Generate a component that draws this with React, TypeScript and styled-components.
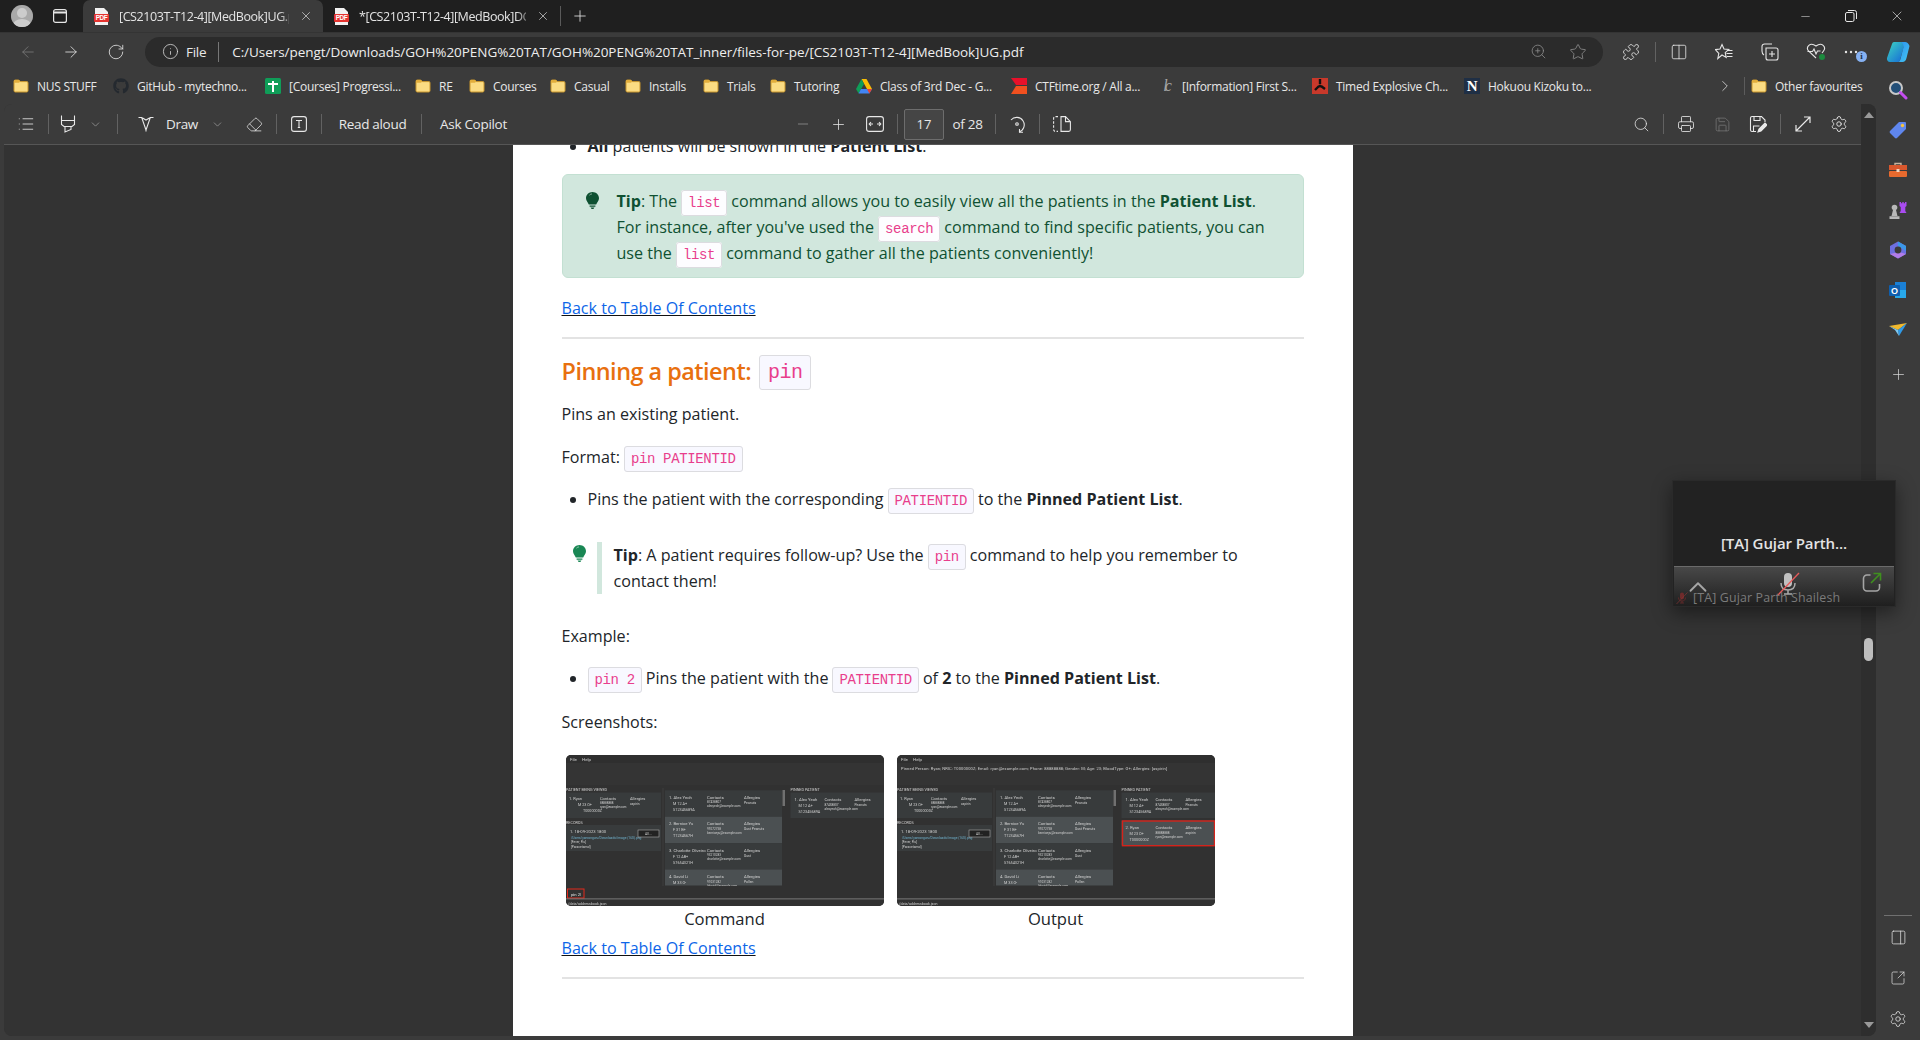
import React from 'react';
import styled, { createGlobalStyle } from 'styled-components';
import {
  ArrowLeft, ArrowRight, ChevronDown, ChevronRight, Info, List, Minus, Plus, Printer, RotateCw, Save,
  Search, Settings, Star, X, ZoomIn, Puzzle, Columns2, PanelRight, SquareArrowOutUpRight, Eraser, ChevronUp,
} from 'lucide-react';
import { FaGithub } from 'react-icons/fa';

const UI_FONT = `"Open Sans", "Noto Sans", sans-serif`;
const MONO = `"Liberation Mono", "DejaVu Sans Mono", monospace`;

const GlobalStyle = createGlobalStyle`
  html, body { margin: 0; padding: 0; background: #3b3b3b; overflow: hidden; }
  * { box-sizing: border-box; }
  #root { width: 1920px; height: 1040px; }
`;

const Window = styled.div`
  position: relative;
  width: 1920px;
  height: 1040px;
  display: flex;
  flex-direction: column;
  overflow: hidden;
  background: #3b3b3b;
  font-family: ${UI_FONT};
  color: #e8e8e8;
`;

/* ---- tab strip ---- */
const TabStrip = styled.div`
  height: 32px;
  flex: none;
  display: flex;
  align-items: stretch;
  background: #1f1f1f;
`;

const StripSlot = styled.div<{ $w: number }>`
  width: ${(p) => p.$w}px;
  flex: none;
  display: flex;
  align-items: center;
  justify-content: center;
  color: #e6e6e6;
`;

const Avatar = styled.div`
  width: 22px;
  height: 22px;
  border-radius: 50%;
  background: #b9b9b9;
  overflow: hidden;
`;

const Tab = styled.div<{ $active?: boolean }>`
  width: ${(p) => (p.$active ? 240 : 237)}px;
  flex: none;
  display: flex;
  align-items: center;
  padding: 0 10px 0 11px;
  gap: 10px;
  border-radius: 7px 7px 0 0;
  background: ${(p) => (p.$active ? '#3b3b3b' : 'transparent')};
  font-size: 12.5px;
  letter-spacing: -0.42px;
`;

const TabTitle = styled.span`
  flex: 1;
  min-width: 0;
  white-space: nowrap;
  color: #e4e4e4;
  mask-image: linear-gradient(to right, #000 94%, rgba(0, 0, 0, 0.45));
`;

const StripSep = styled.div`
  width: 1px;
  height: 20px;
  align-self: center;
  background: #5a5a5a;
`;

const WindowControls = styled.div`
  margin-left: auto;
  display: flex;
`;

/* ---- address bar ---- */
const NavBar = styled.div`
  height: 38px;
  flex: none;
  display: flex;
  align-items: center;
  background: #3b3b3b;
  border-top: 1px solid #343434;
`;

const NavSlot = styled.div<{ $w: number; $ml?: number }>`
  position: relative;
  width: ${(p) => p.$w}px;
  margin-left: ${(p) => p.$ml ?? 0}px;
  flex: none;
  display: flex;
  align-items: center;
  justify-content: center;
  color: #e6e6e6;
`;

const AddressPill = styled.div`
  width: 1458px;
  height: 30px;
  margin-left: 13px;
  flex: none;
  display: flex;
  align-items: center;
  border-radius: 15px;
  background: #2b2b2b;
  padding-left: 17px;
`;

const FileLabel = styled.span`
  font-size: 13.5px;
  margin-left: 7px;
  letter-spacing: -0.3px;
`;

const PillSep = styled.div`
  width: 1px;
  height: 20px;
  margin: 0 13px 0 12px;
  background: #777;
`;

const Url = styled.span`
  font-size: 13.5px;
  letter-spacing: -0.05px;
  color: #eee;
  white-space: nowrap;
`;

const PillEnd = styled.div`
  margin-left: auto;
  display: flex;
  gap: 22px;
  padding-right: 16px;
  color: #8f8f8f;
`;

const Badge = styled.div`
  position: absolute;
  right: 0px;
  bottom: -8px;
  width: 11px;
  height: 11px;
  border-radius: 50%;
  background: #86b1f2;
  color: #20304a;
  font: bold 9px/11px "Liberation Serif", serif;
  text-align: center;
`;

/* ---- main ---- */
const Body = styled.div`
  flex: 1;
  min-height: 0;
  display: flex;
`;

const LeftColumn = styled.div`
  flex: 1;
  min-width: 0;
  display: flex;
  flex-direction: column;
`;

const Bookmarks = styled.div`
  height: 34px;
  flex: none;
  display: flex;
  align-items: center;
  padding: 0 0 2px 13px;
`;

const Bookmark = styled.div<{ $w: number }>`
  width: ${(p) => p.$w}px;
  flex: none;
  display: flex;
  align-items: center;
  gap: 8px;
  font-size: 12px;
  letter-spacing: -0.26px;
  white-space: nowrap;
  color: #e8e8e8;
`;

const BookmarkEnd = styled.div`
  display: flex;
  align-items: center;
  margin-left: 122px;
  color: #ccc;
`;

const BookmarkSep = styled.div`
  width: 1px;
  height: 18px;
  margin: 0 6px 0 10px;
  background: #5c5c5c;
`;

const Viewer = styled.div`
  flex: 1;
  min-height: 0;
  display: flex;
  margin: 0 0 4px 4px;
  border-radius: 8px;
  overflow: hidden;
  background: #333;
`;

const ViewerMain = styled.div`
  flex: 1;
  min-width: 0;
  display: flex;
  flex-direction: column;
`;

const PdfToolbar = styled.div`
  height: 41px;
  flex: none;
  display: flex;
  align-items: center;
  padding: 0 8px;
  background: #3b3b3b;
  border-bottom: 1px solid #565656;
`;

const Tool = styled.div<{ $w: number; $ml?: number; $dim?: boolean }>`
  width: ${(p) => p.$w}px;
  margin-left: ${(p) => p.$ml ?? 0}px;
  flex: none;
  display: flex;
  align-items: center;
  justify-content: center;
  font-size: 13.5px;
  letter-spacing: -0.3px;
  white-space: nowrap;
  color: ${(p) => (p.$dim ? '#777' : '#e8e8e8')};
`;

const ToolSep = styled.div`
  width: 1px;
  height: 20px;
  background: #626262;
`;

const PageInput = styled.div`
  width: 40px;
  height: 31px;
  margin-left: 3px;
  flex: none;
  display: flex;
  align-items: center;
  justify-content: center;
  font-size: 13px;
  background: #454545;
  border: 1px solid #6d6d6d;
  border-radius: 2px;
`;

const ToolsRight = styled.div`
  margin-left: auto;
  display: flex;
  align-items: center;
`;

const Canvas = styled.div`
  flex: 1;
  min-height: 0;
  display: flex;
  justify-content: center;
  overflow: hidden;
  background: #333;
`;

const Page = styled.div`
  width: 840px;
  height: 891px;
  flex: none;
  padding: 0 49px;
  background: #fff;
  overflow: hidden;
  color: #212529;
  font-size: 16.1px;
  line-height: 26px;
`;

const Para = styled.p<{ $mt?: number }>`
  margin: ${(p) => p.$mt ?? 0}px 0 0;
  white-space: nowrap;
`;

const BulletList = styled.ul<{ $mt?: number }>`
  margin: ${(p) => p.$mt ?? 0}px 0 0;
  padding: 0 0 0 26px;
  white-space: nowrap;
`;

const Code = styled.code<{ $white?: boolean; $first?: boolean }>`
  padding: 4px 6px;
  margin: ${(p) => (p.$first ? '0 4px 0 0' : '0 4px')};
  font-family: ${MONO};
  font-size: 14px;
  line-height: 1;
  letter-spacing: -0.35px;
  color: #e83e8c;
  background: ${(p) => (p.$white ? '#fdfdff' : '#f8f8ff')};
  border: 1px solid #dcdce0;
  border-radius: 3px;
`;

const TipBox = styled.div`
  height: 104px;
  margin-top: 15px;
  display: flex;
  padding: 13px 12px 0 23px;
  background: #d1e7dd;
  border: 1px solid #c3e0d2;
  border-radius: 6px;
  color: #0f5132;
  white-space: nowrap;
`;

const BulbCell = styled.div`
  width: 31px;
  flex: none;
  padding-top: 4px;
`;

const PlainTip = styled.div`
  height: 52px;
  margin-top: 30px;
  display: flex;
  white-space: nowrap;
`;

const PlainBulb = styled.div`
  width: 35px;
  flex: none;
  padding: 3px 0 0 11px;
`;

const PlainTipText = styled.div`
  padding-left: 12px;
  border-left: 5px solid #d1e7dd;
`;

const DocLink = styled.a`
  display: inline-block;
  color: #0d66e8;
  text-decoration: underline;
  text-decoration-color: #111;
  white-space: nowrap;
`;

const Rule = styled.div<{ $mt: number }>`
  height: 2px;
  margin-top: ${(p) => p.$mt}px;
  background: #e3e3e3;
`;

const Heading = styled.h2`
  margin: 15px 0 0;
  height: 36px;
  display: flex;
  align-items: center;
  font-size: 23.4px;
  font-weight: 600;
  letter-spacing: -0.5px;
  color: #e8700f;
  white-space: nowrap;
`;

const HeadingTitle = styled.span`
  margin-top: -2px;
`;

const HeadingCode = styled.code`
  height: 35px;
  line-height: 33px;
  margin-left: 8px;
  padding: 0 8px;
  font-family: ${MONO};
  font-size: 20px;
  font-weight: 400;
  letter-spacing: -0.6px;
  color: #e83e8c;
  background: #f8f8ff;
  border: 1px solid #dcdce0;
  border-radius: 3px;
`;

const Figures = styled.div`
  display: flex;
  gap: 13px;
  margin: 20px 0 0 4px;
`;

const Figure = styled.figure`
  width: 318px;
  margin: 0;
  text-align: center;
`;

const Caption = styled.figcaption`
  height: 26px;
  font-size: 16.6px;
`;

const ShotSvg = styled.svg`
  display: block;
  width: 318px;
  height: 151px;
  border-radius: 5px;
  filter: blur(0.3px);
`;

const ScrollTrack = styled.div`
  position: relative;
  width: 15px;
  flex: none;
  display: flex;
  flex-direction: column;
  align-items: center;
  justify-content: space-between;
  padding: 8px 0;
  background: #2e2e2e;
`;

const Arrow = styled.div<{ $down?: boolean }>`
  width: 0;
  height: 0;
  border-left: 5px solid transparent;
  border-right: 5px solid transparent;
  ${(p) => (p.$down ? 'border-top: 6px solid #999;' : 'border-bottom: 6px solid #999;')}
`;

const ScrollThumb = styled.div`
  position: absolute;
  left: 3px;
  top: 534px;
  width: 9px;
  height: 23px;
  border-radius: 5px;
  background: #bdbdbd;
`;

const SideBar = styled.div`
  width: 44px;
  flex: none;
  display: flex;
  flex-direction: column;
  align-items: center;
`;

const SideSlot = styled.div<{ $h: number }>`
  height: ${(p) => p.$h}px;
  flex: none;
  display: flex;
  align-items: center;
  justify-content: center;
  color: #ddd;
`;

const SideSep = styled.div`
  width: 28px;
  height: 1px;
  margin-top: auto;
  background: #707070;
`;

/* ---- floating call window ---- */
const CallWindow = styled.div`
  position: absolute;
  left: 1672px;
  top: 480px;
  width: 224px;
  height: 127px;
  display: flex;
  flex-direction: column;
  background: #222;
  border: 1px solid #2a2a2a;
  box-shadow: 0 6px 18px rgba(0, 0, 0, 0.45);
`;

const CallName = styled.div`
  height: 85px;
  flex: none;
  padding-top: 52px;
  text-align: center;
  font-size: 15px;
  font-weight: 600;
  letter-spacing: -0.1px;
  color: #e4e4e4;
  white-space: nowrap;
`;

const CallBar = styled.div`
  position: relative;
  height: 41px;
  margin: 0 1px;
  display: flex;
  align-items: flex-start;
  justify-content: space-between;
  padding: 5px 12px 0 9px;
  border-top: 1px solid #6b6b6b;
  background: linear-gradient(#484848, #1f1f1f);
`;

const CallLabel = styled.div`
  position: absolute;
  left: 2px;
  top: 22px;
  display: flex;
  align-items: center;
  gap: 5px;
  font-size: 12.4px;
  line-height: 17px;
  letter-spacing: 0.15px;
  color: #7b7b7b;
  white-space: nowrap;
`;

const Folder = () => (
  <svg width="16" height="16" viewBox="0 0 16 16" style={{ flex: 'none' }}>
    <path d="M1 3.2c0-.7.5-1.2 1.2-1.2h3.6l1.6 1.6h6.4c.7 0 1.2.5 1.2 1.2v8c0 .7-.5 1.2-1.2 1.2H2.2c-.7 0-1.2-.5-1.2-1.2z" fill="#fbdc83" stroke="#c8962d" />
    <path d="M1 3.2c0-.7.5-1.2 1.2-1.2h3.6l1.6 1.8-1.6 1H1z" fill="#e2ae3c" />
  </svg>
);

const PdfIcon = () => (
  <svg width="15" height="17" viewBox="0 0 15 17" style={{ flex: 'none' }}>
    <path d="M1 0h9l4 4v13H1z" fill="#f2f2f2" />
    <rect x="0" y="6" width="15" height="8" rx="1" fill="#e5332f" />
    <text x="7.5" y="12.4" textAnchor="middle" fontSize="6.4" fontWeight="700" fill="#fff" fontFamily="Liberation Sans">PDF</text>
  </svg>
);

const Bulb = ({ color }: { color: string }) => (
  <svg width="13" height="17" viewBox="0 0 13 17" style={{ display: 'block' }}>
    <path d="M6.5 0C2.9 0 0 2.8 0 6.2c0 2.8 2 3.8 2.8 6.3h7.4C11 10 13 9 13 6.2 13 2.8 10.1 0 6.5 0z" fill={color} />
    <path d="M3.6 13.5h5.8v1.2H3.6zM4.6 15.5h3.8L7.4 17H5.6z" fill={color} />
    <path d="M3.4 3.2c.8-.9 1.6-1.2 2.6-1.3" stroke="#fff" strokeOpacity=".5" fill="none" />
  </svg>
);

const MarkerIcon = () => (
  <svg width="16" height="18" viewBox="0 0 16 18" fill="none" stroke="#e8e8e8" strokeWidth="1.1">
    <path d="M1.5.5v5h13v-5M1.500 5.500v4l2.500 2h8l2.500-2v-4M1.500 5.500h13M5 11.500v5.500l6-2.500v-3" />
  </svg>
);

const DrawIcon = () => (
  <svg width="18" height="18" viewBox="0 0 18 18" fill="none" stroke="#e8e8e8" strokeWidth="1.1">
    <path d="M1.5 2.5h3.2L9 15l4.3-12.5h3.2M9 15v1.6M4.7 2.5 9 5l4.3-2.5" />
  </svg>
);

const TextBoxIcon = () => (
  <svg width="16" height="16" viewBox="0 0 16 16" fill="none" stroke="#e8e8e8" strokeWidth="1.1">
    <rect x=".6" y=".6" width="14.8" height="14.8" rx="2.5" />
    <path d="M5 4.5h6M8 4.5v7M6.8 11.5h2.4" />
  </svg>
);

const RotateIcon = () => (
  <svg width="18" height="18" viewBox="0 0 18 18" fill="none" stroke="#e8e8e8" strokeWidth="1.1">
    <path d="M3 5a7.5 7.5 0 1 1 8 12" />
    <path d="M11.5 14v3.2H15" />
    <circle cx="9" cy="9" r="1.3" />
  </svg>
);

const PageViewIcon = () => (
  <svg width="18" height="16" viewBox="0 0 18 16" fill="none" stroke="#e8e8e8" strokeWidth="1.1">
    <path d="M8 .6h4.5l4.9 5v8c0 1-.6 1.8-1.6 1.8H8zM12.5.6v5h4.9" />
    <path d="M5 .6H2.4C1.4.6.6 1.4.6 2.4v11.2c0 1 .8 1.8 1.8 1.8H5" strokeDasharray="2.5 1.6" />
  </svg>
);

const FitIcon = () => (
  <svg width="18" height="16" viewBox="0 0 18 16" fill="none" stroke="#e8e8e8" strokeWidth="1.1">
    <rect x=".6" y=".6" width="16.8" height="14.8" rx="2.5" />
    <path d="M7 8H3.5M5 6 3.2 8 5 10M11 8h3.5M13 6l1.8 2L13 10" />
  </svg>
);

const SaveEditIcon = () => (
  <svg width="18" height="18" viewBox="0 0 18 18" fill="none" stroke="#e8e8e8" strokeWidth="1.1">
    <path d="M7 16.5H3A1.6 1.6 0 0 1 1.5 15V3A1.6 1.6 0 0 1 3 1.5h9.5l3.5 3.5v2" />
    <path d="M5 1.5v4h6v-4M4.5 16v-5h6" />
    <path d="M9 17l1-3 6-6 2 2-6 6z" fill="#e8e8e8" />
  </svg>
);

const ExpandIcon = () => (
  <svg width="18" height="18" viewBox="0 0 18 18" fill="none" stroke="#e8e8e8" strokeWidth="1.2">
    <path d="M2 16 16 2M10 2h6v6M2 10v6h6" />
  </svg>
);

const FavListIcon = () => (
  <svg width="18" height="18" viewBox="0 0 18 18" fill="none" stroke="#e6e6e6" strokeWidth="1.1">
    <path d="M7 1.5 9 6l4.8.5-3.6 3.2 1 4.8L7 12l-4.2 3.5 1-5L.4 6.6 5 6zM12 7.5h5.5M11.5 10.5h6M12 13.5h5.5" />
  </svg>
);

const CollectionsIcon = () => (
  <svg width="18" height="18" viewBox="0 0 18 18" fill="none" stroke="#e6e6e6" strokeWidth="1.1">
    <path d="M11 1H3.5A2.5 2.5 0 0 0 1 3.5V8c0 2 1 3.5 2 4M5 5h10a2 2 0 0 1 2 2v8a2 2 0 0 1-2 2H7a2 2 0 0 1-2-2z" />
    <path d="M11 8v6M8 11h6" />
  </svg>
);

const HealthIcon = () => (
  <svg width="20" height="18" viewBox="0 0 20 18" fill="none" stroke="#e6e6e6" strokeWidth="1.1">
    <path d="M10 15 2.5 8C-.5 4 4-1.5 10 3c6-4.5 10.500 1 7.500 5L16 10" />
    <path d="M1.500 8.500h5l1.500-2.500 2 5 1.500-3h3" />
    <rect x="13" y="11" width="6" height="6" rx="3" fill="#1c8a3e" stroke="none" />
  </svg>
);

const CopilotLogo = () => (
  <svg width="24" height="24" viewBox="0 0 24 24">
    <defs>
      <linearGradient id="cp1" x1="0" y1="0" x2="1" y2="1"><stop offset="0" stopColor="#3dd6c2" /><stop offset="1" stopColor="#1466d8" /></linearGradient>
      <linearGradient id="cp2" x1="0" y1="0" x2="1" y2="1"><stop offset="0" stopColor="#2a8cf0" /><stop offset="1" stopColor="#45c8f0" /></linearGradient>
    </defs>
    <path d="M8 2h7c2 0 3 1 3.400 2.500L14 20c-.5 1.500-1.500 2-3 2H4C2 22 .5 20 1 18l5-14C6.400 2.800 7 2 8 2z" fill="url(#cp1)" />
    <path d="M15 2h4c2 0 3.500 1.500 4.500 4l-3 12c-.5 2.500-2 4-4 4h-5c1.500 0 2.500-1 3-3l3-12c.4-2-.6-4-2.500-5z" fill="url(#cp2)" />
  </svg>
);

const SearchPurple = () => (
  <svg width="20" height="20" viewBox="0 0 20 20">
    <circle cx="8" cy="8" r="6" fill="#234f78" stroke="#c8c8c8" strokeWidth="2" />
    <path d="M12.500 12.500 18 18" stroke="#c44df0" strokeWidth="3" strokeLinecap="round" />
  </svg>
);

const TagIcon = () => (
  <svg width="20" height="20" viewBox="0 0 20 20">
    <path d="M11 2h6a1 1 0 0 1 1 1v6l-9 9a1.500 1.500 0 0 1-2 0l-5-5a1.500 1.500 0 0 1 0-2z" fill="#5f86ee" />
    <circle cx="14.500" cy="5.500" r="1.700" fill="#f5c23d" />
  </svg>
);

const ToolboxIcon = () => (
  <svg width="18" height="16" viewBox="0 0 18 16">
    <path d="M6 3V1.500h6V3" stroke="#c9b49e" strokeWidth="1.400" fill="none" />
    <rect y="3" width="18" height="5" fill="#d9572d" />
    <rect y="9" width="18" height="6" rx="1" fill="#e86a2e" />
    <rect x="7.500" y="7" width="3" height="3" fill="#f1d6c2" />
  </svg>
);

const ChessIcon = () => (
  <svg width="18" height="18" viewBox="0 0 18 18">
    <path d="M10.500 1h1.500v1.300h1.300V1h1.400v1.300H16V1h1.500v4l-1.200 1v4l1.200 2h-7l1.200-2V6l-1.200-1z" fill="#a94cf0" />
    <circle cx="5.500" cy="6.500" r="2.800" fill="#b8b8b8" />
    <path d="M4 9h3l1.500 6h-6zM.5 15.200h10V18H.5z" fill="#b8b8b8" />
  </svg>
);

const HexIcon = () => (
  <svg width="18" height="18" viewBox="0 0 18 18">
    <path d="M9 .5 17 5v8l-8 4.500L1 13V5z" fill="#6e6fe0" />
    <path d="M9 .5 17 5v5L9 5z" fill="#3b98e8" />
    <path d="M1 13l8 4.500L17 13l-7-2z" fill="#b17ce8" />
    <circle cx="9" cy="9" r="3.400" fill="#3b3b3b" />
  </svg>
);

const OutlookIcon = () => (
  <svg width="18" height="18" viewBox="0 0 18 18">
    <path d="M6 1h11v16H6z" fill="#1a80d6" />
    <path d="M6 9h11v8H6z" fill="#28a8ea" />
    <rect x="0" y="4" width="11" height="11" rx="1" fill="#0f5fae" />
    <text x="5.500" y="12.500" textAnchor="middle" fontSize="9" fontWeight="700" fill="#fff" fontFamily="Liberation Sans">O</text>
  </svg>
);

const PlaneIcon = () => (
  <svg width="18" height="14" viewBox="0 0 18 14">
    <path d="M0 3 18 0 9 7z" fill="#f0b82d" />
    <path d="M18 0 9 7l1 6z" fill="#2f9ae8" />
    <path d="M0 3l9 4 1 6-4-6z" fill="#7cc8f2" />
  </svg>
);

const MicIcon = ({ size, dim }: { size: number; dim?: boolean }) => (
  <svg width={size} height={size} viewBox="0 0 24 24" fill="none" style={{ flex: 'none' }}>
    <rect x="8" y="1" width="8" height="14" rx="4" fill={dim ? '#6f2b2b' : '#c0c0c0'} />
    <path d="M5 11c0 5 3 7 7 7s7-2 7-7M12 18v4M8 22h8" stroke={dim ? '#6f2b2b' : '#aaa'} strokeWidth="1.500" />
    <path d="M1 24 23 1" stroke={dim ? '#8a3434' : '#e85a5a'} strokeWidth="1.300" />
  </svg>
);

const ShareOutIcon = () => (
  <svg width="20" height="20" viewBox="0 0 20 20" fill="none" strokeWidth="1.600">
    <path d="M8.500 3H5a3.500 3.500 0 0 0-3.500 3.500v9A3.500 3.500 0 0 0 5 19h9a3.500 3.500 0 0 0 3.500-3.500V12" stroke="#a5a5a5" />
    <path d="M9 11 18.500 1.500M11.500 1.500h7v7" stroke="#3f8f1e" />
  </svg>
);

const BookmarkIconBox = styled.span`
  width: 16px;
  height: 16px;
  flex: none;
  display: flex;
  align-items: center;
  justify-content: center;
`;

const Sheets = () => (
  <svg width="16" height="16" viewBox="0 0 16 16">
    <rect width="16" height="16" rx="1.500" fill="#0f9d58" />
    <path d="M3 6h10M8 3v11" stroke="#fff" strokeWidth="2" />
  </svg>
);

const Drive = () => (
  <svg width="16" height="15" viewBox="0 0 16 15">
    <path d="M5.500 0h5L16 10h-5z" fill="#fbbc04" />
    <path d="M5.500 0 0 10l2.600 4.500L8 5z" fill="#0f9d58" />
    <path d="M2.600 14.500h10.800L16 10H5z" fill="#4285f4" />
    <path d="M11 10h5l-2.600 4.500z" fill="#ea4335" />
  </svg>
);

const Ctf = () => (
  <svg width="16" height="16" viewBox="0 0 16 16">
    <path d="M0 0h16v7H5z" fill="#e8102a" />
    <path d="M5 8h11v8H0z" fill="#f0501f" />
  </svg>
);

const LcLogo = styled.span`
  font: italic 16px "Liberation Serif", serif;
  letter-spacing: -3px;
  color: #a5a5a5;
`;

const Propeller = () => (
  <svg width="16" height="16" viewBox="0 0 16 16">
    <rect width="16" height="16" fill="#c8392b" />
    <path d="M8 1v5M3 12l4-4M13 11 9 8" stroke="#111" strokeWidth="2.400" />
    <circle cx="8" cy="8" r="1.600" fill="#111" />
  </svg>
);

const NLogo = styled.span`
  width: 16px;
  height: 16px;
  display: flex;
  align-items: center;
  justify-content: center;
  background: #1f2f45;
  color: #fff;
  font: bold 15px "Liberation Serif", serif;
`;

interface CardRow {
  title: string;
  l1: string;
  l2: string;
  c1: string;
  c2: string;
  a1: string;
}

const listRows: CardRow[] = [
  { title: '1. Alex Yeoh', l1: 'M   12   A+', l2: 'S12345689A', c1: '87438807', c2: 'alexyeoh@example.com', a1: 'Peanuts' },
  { title: '2. Bernice Yu', l1: 'F   31   B+', l2: 'T1234567H', c1: '99272758', c2: 'berniceyu@example.com', a1: 'Dust Peanuts' },
  { title: '3. Charlotte Oliveiro', l1: 'F   12   AB+', l2: 'S7654321H', c1: '93210283', c2: 'charlotte@example.com', a1: 'Dust' },
  { title: '4. David Li', l1: 'M   33   O-', l2: '', c1: '91031282', c2: 'lidavid@example.com', a1: 'Pollen' },
];

interface ShotRowProps {
  y: number;
  x: number;
  h: number;
  w: number;
  row: CardRow;
  fill: string;
  contactsAt?: number;
  allergiesAt?: number;
}

const ShotRow = ({ y, x, h, w, row, fill, contactsAt = 42, allergiesAt = 79 }: ShotRowProps) => (
  <g>
    <rect x={x} y={y} width={w} height={h} fill={fill} />
    <text x={x + 4} y={y + 8.500} fontSize="4.200">{row.title}</text>
    <text x={x + 8} y={y + 14.500} fontSize="3.800">{row.l1}</text>
    <text x={x + 8} y={y + 20.500} fontSize="3.800">{row.l2}</text>
    <text x={x + contactsAt} y={y + 8.500} fontSize="4.200">Contacts</text>
    <text x={x + contactsAt} y={y + 13} fontSize="3.100">{row.c1}</text>
    <text x={x + contactsAt} y={y + 17} fontSize="3.100">{row.c2}</text>
    <text x={x + allergiesAt} y={y + 8.500} fontSize="4.200">Allergies</text>
    <text x={x + allergiesAt} y={y + 13.500} fontSize="3.400">{row.a1}</text>
  </g>
);

const AppShot = ({ output }: { output?: boolean }) => {
  const ryan: CardRow = { title: '2. Ryan', l1: 'M   23   O+', l2: 'T0000000Z', c1: '88888888', c2: 'ryan@example.com', a1: 'aspirin' };
  return (
    <ShotSvg viewBox="0 0 318 151" fontFamily="Roboto, sans-serif" fill="#cfcfcf">
      <rect width="318" height="151" fill="#313131" />
      <rect width="318" height="8" fill="#2f2f2f" />
      <text x="4" y="5.500" fontSize="4.400">File</text>
      <text x="16" y="5.500" fontSize="4.400">Help</text>
      <rect y="8" width="318" height="22" fill="#343434" />
      {output && (
        <text x="4" y="15" fontSize="4" textLength="266">Pinned Person: Ryan; NRIC: T0000000Z; Email: ryan@example.com; Phone: 88888888; Gender: M; Age: 23; BloodType: O+; Allergies: [aspirin]</text>
      )}
      <text x="0" y="36" fontSize="3.800">PATIENT BEING VIEWED</text>
      <rect y="37.500" width="95" height="25.500" fill="#383b3c" />
      <text x="3" y="45" fontSize="4">1. Ryan</text>
      <text x="12" y="51" fontSize="3.700">M  23  O+</text>
      <text x="17" y="56.500" fontSize="3.700">T0000000Z</text>
      <text x="34" y="45" fontSize="4">Contacts</text>
      <text x="34" y="49" fontSize="3">88888888</text>
      <text x="34" y="53" fontSize="3">ryan@example.com</text>
      <text x="64" y="45" fontSize="4">Allergies</text>
      <text x="64" y="49.500" fontSize="3.200">aspirin</text>
      <text x="0" y="69" fontSize="3.800">RECORDS</text>
      <rect y="70" width="95" height="26" fill="#383b3c" />
      <text x="4" y="77.500" fontSize="4.200">1. 18-09-2023 1800</text>
      <text x="5" y="83.500" fontSize="3.300" fill="#6fb1cc">/Users/yanrongwu/Downloads/image (160).png</text>
      <text x="5" y="88" fontSize="3.200">[Fever, Flu]</text>
      <text x="5" y="92.500" fontSize="3.200">[Paracetamol]</text>
      <rect x="72" y="75" width="21" height="7" fill="#222" stroke="#aaa" strokeWidth=".6" />
      <text x="79" y="80" fontSize="3.400">All...</text>
      <rect x="96.500" y="33" width="1" height="98" fill="#3f3f3f" />
      {listRows.map((row, i) => (
        <ShotRow key={row.title} y={35.300 + i * 26.400} x={99} w={117} h={i === 3 ? 16 : 26.400} row={row} fill={i % 2 ? '#4b5052' : '#383b3c'} />
      ))}
      <rect x="216.500" y="35" width="2.500" height="16" fill="#707070" />
      <rect y="131" width="318" height="20" fill="#313131" />
      <text x="224.500" y="36" fontSize="3.800">PINNED PATIENT</text>
      <ShotRow y={37.500} x={224.500} w={93.500} h={25.500} row={listRows[0]} fill="#383b3c" contactsAt={34} allergiesAt={64} />
      {output && (
        <g>
          <ShotRow y={65.500} x={224.500} w={93.500} h={25} row={ryan} fill="#4b5052" contactsAt={34} allergiesAt={64} />
          <rect x="225.500" y="66" width="92" height="24.700" fill="none" stroke="#d4231b" strokeWidth="1.400" />
        </g>
      )}
      {!output && (
        <g>
          <text x="5" y="140.500" fontSize="4.200" fill="#e0e0e0">pin 2|</text>
          <rect x="1.500" y="134" width="16.500" height="9" fill="none" stroke="#e32a1d" strokeWidth="1" />
        </g>
      )}
      <rect y="143.500" width="318" height=".8" fill="#8a8a8a" />
      <text x="1" y="149.500" fontSize="3.600">./data/addressbook.json</text>
    </ShotSvg>
  );
};

const App: React.FC = () => {
  return (
    <Window>
      <GlobalStyle />
      <TabStrip>
        <StripSlot $w={44}>
          <Avatar>
            <svg width="22" height="22" viewBox="0 0 22 22">
              <circle cx="11" cy="8" r="5" fill="#efefef" />
              <ellipse cx="11" cy="20" rx="9" ry="6" fill="#efefef" />
              <rect width="22" height="22" fill="#8c8c8c" opacity=".35" />
            </svg>
          </Avatar>
        </StripSlot>
        <StripSlot $w={32}>
          <svg width="14" height="14" viewBox="0 0 14 14" fill="none" stroke="#e6e6e6" strokeWidth="1.200">
            <rect x=".6" y=".6" width="12.800" height="12.800" rx="2" />
            <path d="M.6 3.500h12.800" strokeWidth="2" />
          </svg>
        </StripSlot>
        <StripSlot $w={7} />
        <Tab $active>
          <PdfIcon />
          <TabTitle>[CS2103T-T12-4][MedBook]UG.p</TabTitle>
          <X size={14} strokeWidth={1.200} color="#ddd" />
        </Tab>
        <Tab>
          <PdfIcon />
          <TabTitle>*[CS2103T-T12-4][MedBook]DG.p</TabTitle>
          <X size={14} strokeWidth={1.200} color="#ddd" />
        </Tab>
        <StripSep />
        <StripSlot $w={37}>
          <Plus size={18} strokeWidth={1.100} />
        </StripSlot>
        <WindowControls>
          <StripSlot $w={46}><Minus size={13} strokeWidth={1} /></StripSlot>
          <StripSlot $w={46}>
            <svg width="12" height="12" viewBox="0 0 12 12" fill="none" stroke="#e6e6e6">
              <rect x=".5" y="2.500" width="8.500" height="9" rx="1.500" />
              <path d="M3 .5h6.500A2 2 0 0 1 11.500 2.500V9" />
            </svg>
          </StripSlot>
          <StripSlot $w={46}><X size={16} strokeWidth={1} /></StripSlot>
        </WindowControls>
      </TabStrip>

      <NavBar>
        <NavSlot $w={32} $ml={12}><ArrowLeft size={18} strokeWidth={1.100} color="#7a7a7a" /></NavSlot>
        <NavSlot $w={32} $ml={11}><ArrowRight size={18} strokeWidth={1.100} /></NavSlot>
        <NavSlot $w={32} $ml={13}><RotateCw size={18} strokeWidth={1.100} /></NavSlot>
        <AddressPill>
          <Info size={17} strokeWidth={1.100} color="#ddd" />
          <FileLabel>File</FileLabel>
          <PillSep />
          <Url>C:/Users/pengt/Downloads/GOH%20PENG%20TAT/GOH%20PENG%20TAT_inner/files-for-pe/[CS2103T-T12-4][MedBook]UG.pdf</Url>
          <PillEnd>
            <ZoomIn size={17} strokeWidth={1.100} />
            <Star size={18} strokeWidth={1.100} />
          </PillEnd>
        </AddressPill>
        <NavSlot $w={32} $ml={12}><Puzzle size={18} strokeWidth={1.100} /></NavSlot>
        <NavSlot $w={1} $ml={8}><ToolSep /></NavSlot>
        <NavSlot $w={32} $ml={7}><Columns2 size={18} strokeWidth={1.100} /></NavSlot>
        <NavSlot $w={32} $ml={13}><FavListIcon /></NavSlot>
        <NavSlot $w={32} $ml={14}><CollectionsIcon /></NavSlot>
        <NavSlot $w={32} $ml={14}><HealthIcon /></NavSlot>
        <NavSlot $w={32} $ml={3}>
          <svg width="14" height="4" viewBox="0 0 14 4" fill="#e6e6e6"><circle cx="2" cy="2" r="1.200" /><circle cx="7" cy="2" r="1.200" /><circle cx="12" cy="2" r="1.200" /></svg>
          <Badge>i</Badge>
        </NavSlot>
        <NavSlot $w={32} $ml={15}><CopilotLogo /></NavSlot>
      </NavBar>

      <Body>
        <LeftColumn>
          <Bookmarks>
            <Bookmark $w={100}><Folder />NUS STUFF</Bookmark>
            <Bookmark $w={152}><BookmarkIconBox><FaGithub size={16} color="#24292f" /></BookmarkIconBox>GitHub - mytechno...</Bookmark>
            <Bookmark $w={150}><Sheets />[Courses] Progressi...</Bookmark>
            <Bookmark $w={54}><Folder />RE</Bookmark>
            <Bookmark $w={81}><Folder />Courses</Bookmark>
            <Bookmark $w={75}><Folder />Casual</Bookmark>
            <Bookmark $w={78}><Folder />Installs</Bookmark>
            <Bookmark $w={67}><Folder />Trials</Bookmark>
            <Bookmark $w={86}><Folder />Tutoring</Bookmark>
            <Bookmark $w={155}><BookmarkIconBox><Drive /></BookmarkIconBox>Class of 3rd Dec - G...</Bookmark>
            <Bookmark $w={147}><Ctf />CTFtime.org / All a...</Bookmark>
            <Bookmark $w={154}><BookmarkIconBox><LcLogo>lc</LcLogo></BookmarkIconBox>[Information] First S...</Bookmark>
            <Bookmark $w={152}><Propeller />Timed Explosive Ch...</Bookmark>
            <Bookmark $w={130}><NLogo>N</NLogo>Hokuou Kizoku to...</Bookmark>
            <BookmarkEnd>
              <ChevronRight size={18} strokeWidth={1.200} />
              <BookmarkSep />
            </BookmarkEnd>
            <Bookmark $w={110}><Folder />Other favourites</Bookmark>
          </Bookmarks>
          <Viewer>
            <ViewerMain>
              <PdfToolbar>
                <Tool $w={28}><List size={18} strokeWidth={1.100} /></Tool>
                <Tool $w={16}><ToolSep /></Tool>
                <Tool $w={24}><MarkerIcon /></Tool>
                <Tool $w={20} $ml={5}><ChevronDown size={13} strokeWidth={1.200} color="#aaa" /></Tool>
                <Tool $w={14} $ml={5}><ToolSep /></Tool>
                <Tool $w={32} $ml={6}><DrawIcon /></Tool>
                <Tool $w={40}>Draw</Tool>
                <Tool $w={20} $ml={5}><ChevronDown size={13} strokeWidth={1.200} color="#aaa" /></Tool>
                <Tool $w={28} $ml={13}><Eraser size={17} strokeWidth={1.100} /></Tool>
                <Tool $w={16}><ToolSep /></Tool>
                <Tool $w={28} $ml={1}><TextBoxIcon /></Tool>
                <Tool $w={16}><ToolSep /></Tool>
                <Tool $w={69} $ml={9}>Read aloud</Tool>
                <Tool $w={16} $ml={6}><ToolSep /></Tool>
                <Tool $w={71} $ml={9}>Ask Copilot</Tool>
                <Tool $w={28} $ml={280}><Minus size={16} strokeWidth={1.100} color="#999" /></Tool>
                <Tool $w={28} $ml={7}><Plus size={17} strokeWidth={1.100} /></Tool>
                <Tool $w={28} $ml={9}><FitIcon /></Tool>
                <Tool $w={8} $ml={4}><ToolSep /></Tool>
                <PageInput>17</PageInput>
                <Tool $w={27} $ml={10}>of 28</Tool>
                <Tool $w={8} $ml={10}><ToolSep /></Tool>
                <Tool $w={28} $ml={4}><RotateIcon /></Tool>
                <Tool $w={8} $ml={4}><ToolSep /></Tool>
                <Tool $w={28} $ml={5}><PageViewIcon /></Tool>
                <ToolsRight>
                  <Tool $w={28}><Search size={17} strokeWidth={1.100} /></Tool>
                  <Tool $w={8} $ml={4}><ToolSep /></Tool>
                  <Tool $w={28} $ml={5}><Printer size={18} strokeWidth={1.100} /></Tool>
                  <Tool $w={28} $ml={8} $dim><Save size={17} strokeWidth={1.100} /></Tool>
                  <Tool $w={28} $ml={8}><SaveEditIcon /></Tool>
                  <Tool $w={8} $ml={4}><ToolSep /></Tool>
                  <Tool $w={28} $ml={5}><ExpandIcon /></Tool>
                  <Tool $w={28} $ml={8}><Settings size={18} strokeWidth={1.200} /></Tool>
                </ToolsRight>
              </PdfToolbar>
              <Canvas>
                <Page>
                  <BulletList $mt={-12}>
                    <li><strong>All</strong> patients will be shown in the <strong>Patient List</strong>.</li>
                  </BulletList>
                  <TipBox>
                    <BulbCell><Bulb color="#0f5132" /></BulbCell>
                    <div>
                      <div><strong>Tip</strong>: The<Code $white>list</Code>command allows you to easily view all the patients in the <strong>Patient List</strong>.</div>
                      <div>For instance, after you've used the<Code $white>search</Code>command to find specific patients, you can</div>
                      <div>use the<Code $white>list</Code>command to gather all the patients conveniently!</div>
                    </div>
                  </TipBox>
                  <Para $mt={17}><DocLink>Back to Table Of Contents</DocLink></Para>
                  <Rule $mt={16} />
                  <Heading><HeadingTitle>Pinning a patient:</HeadingTitle><HeadingCode>pin</HeadingCode></Heading>
                  <Para $mt={11}>Pins an existing patient.</Para>
                  <Para $mt={17}>Format:<Code>pin PATIENTID</Code></Para>
                  <BulletList $mt={16}>
                    <li>Pins the patient with the corresponding<Code>PATIENTID</Code>to the <strong>Pinned Patient List</strong>.</li>
                  </BulletList>
                  <PlainTip>
                    <PlainBulb><Bulb color="#198754" /></PlainBulb>
                    <PlainTipText>
                      <div><strong>Tip</strong>: A patient requires follow-up? Use the<Code>pin</Code>command to help you remember to</div>
                      <div>contact them!</div>
                    </PlainTipText>
                  </PlainTip>
                  <Para $mt={29}>Example:</Para>
                  <BulletList $mt={16}>
                    <li><Code $first>pin 2</Code>Pins the patient with the<Code>PATIENTID</Code>of <strong>2</strong> to the <strong>Pinned Patient List</strong>.</li>
                  </BulletList>
                  <Para $mt={18}>Screenshots:</Para>
                  <Figures>
                    <Figure>
                      <AppShot />
                      <Caption>Command</Caption>
                    </Figure>
                    <Figure>
                      <AppShot output />
                      <Caption>Output</Caption>
                    </Figure>
                  </Figures>
                  <Para $mt={3}><DocLink>Back to Table Of Contents</DocLink></Para>
                  <Rule $mt={16} />
                </Page>
              </Canvas>
            </ViewerMain>
            <ScrollTrack>
              <Arrow />
              <ScrollThumb />
              <Arrow $down />
            </ScrollTrack>
          </Viewer>
        </LeftColumn>
        <SideBar>
          <SideSlot $h={40}><SearchPurple /></SideSlot>
          <SideSlot $h={40}><TagIcon /></SideSlot>
          <SideSlot $h={40}><ToolboxIcon /></SideSlot>
          <SideSlot $h={40}><ChessIcon /></SideSlot>
          <SideSlot $h={40}><HexIcon /></SideSlot>
          <SideSlot $h={40}><OutlookIcon /></SideSlot>
          <SideSlot $h={40}><PlaneIcon /></SideSlot>
          <SideSlot $h={48}><Plus size={17} strokeWidth={1} /></SideSlot>
          <SideSep />
          <SideSlot $h={42}><PanelRight size={17} strokeWidth={1.100} /></SideSlot>
          <SideSlot $h={40}><SquareArrowOutUpRight size={16} strokeWidth={1.100} /></SideSlot>
          <SideSlot $h={42}><Settings size={18} strokeWidth={1.100} /></SideSlot>
        </SideBar>
      </Body>

      <CallWindow>
        <CallName>[TA] Gujar Parth...</CallName>
        <CallBar>
          <ChevronUp size={30} strokeWidth={1.500} color="#a5a5a5" />
          <MicIcon size={24} />
          <ShareOutIcon />
          <CallLabel><MicIcon size={12} dim />[TA] Gujar Parth Shailesh</CallLabel>
        </CallBar>
      </CallWindow>
    </Window>
  );
};

export default App;
